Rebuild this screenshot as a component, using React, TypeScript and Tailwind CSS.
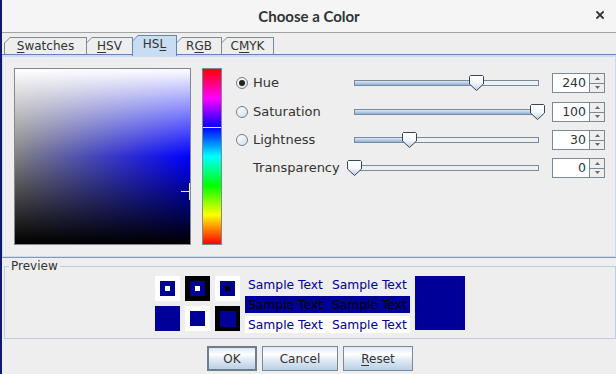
import React from "react";

function Mn({ children }: { children: React.ReactNode }) {
  return <span className="underline decoration-1 underline-offset-[2px]">{children}</span>;
}

function Tab({ label, cls, sel }: { label: React.ReactNode; cls: string; sel?: boolean }) {
  if (sel) {
    return (
      <div className={`${cls} relative z-10 -ml-px h-[21px] -mb-[2px] bg-[#6382bf] px-px pt-px [clip-path:polygon(6px_0,100%_0,100%_100%,0_100%,0_6px)]`}>
        <div className="flex h-full items-start justify-center bg-[#c8ddf2] pt-[1px] [clip-path:polygon(5px_0,100%_0,100%_100%,0_100%,0_5px)]">
          <span className="leading-[15px]">{label}</span>
        </div>
      </div>
    );
  }
  return (
    <div className={`${cls} -ml-px h-[17px] bg-[#7a8a99] px-px pt-px [clip-path:polygon(6px_0,100%_0,100%_100%,0_100%,0_6px)] first:ml-0`}>
      <div className="flex h-full items-center justify-center bg-[#eeeeee] [clip-path:polygon(5px_0,100%_0,100%_100%,0_100%,0_5px)]">
        <span className="leading-[15px]">{label}</span>
      </div>
    </div>
  );
}

function Radio({ checked }: { checked?: boolean }) {
  return (
    <div className="flex h-[12px] w-[12px] shrink-0 items-center justify-center rounded-full border border-[#6f7f8e] bg-[linear-gradient(135deg,#ffffff,#d3dfeb)]">
      {checked && <div className="h-[6px] w-[6px] rounded-full bg-[#222222]" />}
    </div>
  );
}

function Thumb({ id }: { id: string }) {
  return (
    <svg width="15" height="16" viewBox="0 0 15 16">
      <defs>
        <linearGradient id={id} x1="0" y1="0" x2="0" y2="1">
          <stop offset="0" stopColor="#ffffff" />
          <stop offset="0.5" stopColor="#f4f8fc" />
          <stop offset="1" stopColor="#b8cfe5" />
        </linearGradient>
      </defs>
      <path d="M1.5 0.5 H13.5 L14.5 1.5 V9 L7.5 15.5 L0.5 9 V1.5 Z" fill={`url(#${id})`} stroke="#3a4450" strokeWidth="1" />
    </svg>
  );
}

function Slider({ pct, id }: { pct: number; id: string }) {
  return (
    <div className="relative h-[6px] w-[185px] shrink-0 border border-[#7a8a99] bg-[#eef1f4]">
      <div
        className="absolute bottom-0 left-0 top-0 bg-[linear-gradient(to_bottom,#dce8f5,#8fb0dc)]"
        style={{ width: `${pct}%` }}
      />
      <div className="absolute -top-[6px]" style={{ left: `calc(${pct}% - 8px)` }}>
        <Thumb id={id} />
      </div>
    </div>
  );
}

function Arrow({ up }: { up?: boolean }) {
  return (
    <svg width="5" height="3" viewBox="0 0 5 3">
      {up ? <path d="M0 3 L2.5 0 L5 3 Z" fill="#666" /> : <path d="M0 0 L5 0 L2.5 3 Z" fill="#666" />}
    </svg>
  );
}

function Spinner({ v }: { v: string }) {
  return (
    <div className="flex h-[20px] shrink-0">
      <div className="h-full w-[38px] border border-[#7a8a99] bg-white pr-[3px] text-right text-[12.5px] leading-[18px]">{v}</div>
      <div className="flex h-full w-[15px] flex-col border border-l-0 border-[#7a8a99] bg-[#eeeeee]">
        <div className="flex flex-1 items-center justify-center border-b border-[#7a8a99]">
          <Arrow up />
        </div>
        <div className="flex flex-1 items-center justify-center">
          <Arrow />
        </div>
      </div>
    </div>
  );
}

function Row({ h, children }: { h: string; children: React.ReactNode }) {
  return <div className={`flex ${h} items-center`}>{children}</div>;
}

export default function App() {
  const blue = "#000099";
  return (
    <div className="flex h-[374px] w-[616px] overflow-hidden bg-[#eeeeee] font-['DejaVu_Sans',sans-serif] text-[12px] text-[#333333]">
      <div className="h-full w-[2px] shrink-0 bg-[#0f1a6b]" />
      <div className="flex min-w-0 flex-1 flex-col">
        {/* title bar */}
        <div className="relative flex h-[33px] shrink-0 items-center justify-center border-b border-[#a2a2a2] bg-[#f5f5f5]">
          <span className="font-['Lato',sans-serif] text-[15px] font-bold text-[#2e3436]">Choose a Color</span>
          <svg className="absolute right-[12px] top-[11px]" width="8" height="8" viewBox="0 0 8 8">
            <path d="M1 1 L7 7 M7 1 L1 7" stroke="#2e3436" strokeWidth="1.8" strokeLinecap="square" />
          </svg>
        </div>

        {/* tabs */}
        <div className="flex h-[21px] shrink-0 items-end pl-[2px]">
          <Tab cls="w-[83px]" label={<><Mn>S</Mn>watches</>} />
          <Tab cls="w-[47px]" label={<><Mn>H</Mn>SV</>} />
          <Tab cls="w-[45px]" sel label={<>HS<Mn>L</Mn></>} />
          <Tab cls="w-[46px]" label={<>R<Mn>G</Mn>B</>} />
          <Tab cls="w-[53px]" label={<>C<Mn>M</Mn>YK</>} />
        </div>

        {/* panel */}
        <div className="shrink-0 border-b border-t border-b-[#8c9aa8] border-t-[#6382bf]">
          <div className="flex border-x border-b border-t-2 border-[#c8ddf2] pb-[11px] pl-[11px] pt-[11px]">
            {/* color square */}
            <div className="relative h-[177px] w-[177px] shrink-0 border border-[#7a8a99] bg-[linear-gradient(to_bottom,#ffffff_0%,rgba(255,255,255,0)_50%,rgba(0,0,0,0)_50%,#000000_100%),linear-gradient(to_right,#808080,#0000ff)]">
              <div className="absolute left-[166px] top-[122px] h-px w-[9px] bg-[#f2f28a]" />
              <div className="absolute left-[174px] top-[114px] h-[17px] w-px bg-[#f2f28a]" />
            </div>
            {/* hue strip */}
            <div className="relative ml-[11px] h-[177px] w-[20px] shrink-0 border border-[#7a8a99] bg-[linear-gradient(to_bottom,#ff0000,#ff00ff_16.67%,#0000ff_33.33%,#00ffff_50%,#00ff00_66.67%,#ffff00_83.33%,#ff0000)]">
              <div className="absolute left-0 right-0 top-[58px] h-px bg-[#eeee88]" />
            </div>
            {/* controls */}
            <div className="ml-[14px] flex flex-col text-[13px]">
              <Row h="h-[30px]">
                <div className="flex w-[118px] items-center gap-[5px]">
                  <Radio checked />
                  <span>Hue</span>
                </div>
                <Slider pct={66.67} id="t1" />
                <div className="ml-[13px]">
                  <Spinner v="240" />
                </div>
              </Row>
              <Row h="h-[28px]">
                <div className="flex w-[118px] items-center gap-[5px]">
                  <Radio />
                  <span>Saturation</span>
                </div>
                <Slider pct={100} id="t2" />
                <div className="ml-[13px]">
                  <Spinner v="100" />
                </div>
              </Row>
              <Row h="h-[28px]">
                <div className="flex w-[118px] items-center gap-[5px]">
                  <Radio />
                  <span>Lightness</span>
                </div>
                <Slider pct={30} id="t3" />
                <div className="ml-[13px]">
                  <Spinner v="30" />
                </div>
              </Row>
              <Row h="h-[28px]">
                <div className="flex w-[118px] items-center pl-[17px]">
                  <span>Transparency</span>
                </div>
                <Slider pct={0} id="t4" />
                <div className="ml-[13px]">
                  <Spinner v="0" />
                </div>
              </Row>
            </div>
          </div>
        </div>

        {/* preview */}
        <div className="relative ml-[2px] mt-[8px] h-[73px] shrink-0 border border-[#b8cfe5]">
          <span className="absolute -top-[8px] left-[4px] bg-[#eeeeee] px-[2px] leading-[14px]">Preview</span>
          <div className="flex justify-center gap-[5px] pt-[9px]">
            <div className="grid grid-cols-3 gap-[5px] self-start">
              <div className="flex h-[25px] w-[25px] items-center justify-center bg-white">
                <div className="flex h-[15px] w-[15px] items-center justify-center bg-[#000099]">
                  <div className="h-[5px] w-[5px] bg-white" />
                </div>
              </div>
              <div className="flex h-[25px] w-[25px] items-center justify-center bg-black">
                <div className="flex h-[15px] w-[15px] items-center justify-center bg-[#000099]">
                  <div className="h-[5px] w-[5px] bg-white" />
                </div>
              </div>
              <div className="flex h-[25px] w-[25px] items-center justify-center bg-white">
                <div className="flex h-[15px] w-[15px] items-center justify-center bg-[#000099]">
                  <div className="h-[5px] w-[5px] bg-black" />
                </div>
              </div>
              <div className="h-[25px] w-[25px] bg-[#000099]" />
              <div className="flex h-[25px] w-[25px] items-center justify-center bg-white">
                <div className="h-[15px] w-[15px] bg-[#000099]" />
              </div>
              <div className="flex h-[25px] w-[25px] items-center justify-center bg-black">
                <div className="h-[16px] w-[16px] bg-[#000099]" />
              </div>
            </div>
            <div className="flex w-[165px] flex-col gap-[3px] text-[12.3px]">
              <div className="flex h-[17px] items-center gap-[9px] whitespace-nowrap pl-[3px] pt-px text-[#000099]">
                <span>Sample Text</span>
                <span>Sample Text</span>
              </div>
              <div className="flex h-[17px] items-center gap-[9px] whitespace-nowrap bg-[#000099] pl-[3px] pt-px text-black">
                <span>Sample Text</span>
                <span>Sample Text</span>
              </div>
              <div className="flex h-[17px] items-center gap-[9px] whitespace-nowrap bg-white pl-[3px] pt-px text-[#000099]">
                <span>Sample Text</span>
                <span>Sample Text</span>
              </div>
            </div>
            <div className="h-[54px] w-[50px]" style={{ backgroundColor: blue }} />
          </div>
        </div>

        {/* buttons */}
        <div className="mt-[7px] flex shrink-0 justify-center gap-[5px] pl-[2px]">
          <button className="h-[25px] w-[50px] border-2 border-[#6f7e8d] bg-[linear-gradient(to_bottom,#dde8f3_0%,#ffffff_30%,#dde8f3_60%,#b8cfe5_100%)] text-[#333333]">
            OK
          </button>
          <button className="h-[25px] w-[76px] border border-[#7a8a99] bg-[linear-gradient(to_bottom,#dde8f3_0%,#ffffff_30%,#dde8f3_60%,#b8cfe5_100%)] text-[#333333]">
            Cancel
          </button>
          <button className="h-[25px] w-[70px] border border-[#7a8a99] bg-[linear-gradient(to_bottom,#dde8f3_0%,#ffffff_30%,#dde8f3_60%,#b8cfe5_100%)] text-[#333333]">
            <Mn>R</Mn>eset
          </button>
        </div>
      </div>
    </div>
  );
}
